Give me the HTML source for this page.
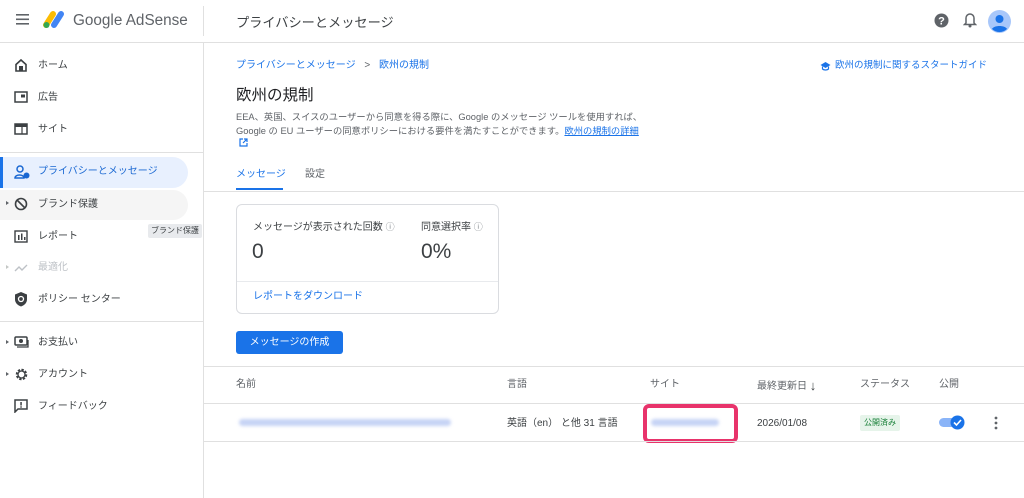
<!DOCTYPE html>
<html><head><meta charset="utf-8">
<style>
*{margin:0;padding:0;box-sizing:border-box}
body{width:1024px;height:498px;overflow:hidden;background:#fff;font-family:"Liberation Sans","Noto Sans CJK JP",sans-serif;color:#3c4043;position:relative}
.a{position:absolute;white-space:nowrap}
.hl{position:absolute;height:1px;background:#e0e0e0}
.nav{position:absolute;left:38px;font-size:10px;color:#3c4043;line-height:12px}
.ic{position:absolute;left:14px}
.s{font-size:10px;line-height:12px}
.blue{color:#1a73e8}
.blur{position:absolute;height:7px;background:#c6d3f5;border-radius:4px;filter:blur(1.5px)}
</style></head><body>
<!-- header -->
<div class="hl" style="left:0;top:42px;width:1024px"></div>
<div class="a" style="left:203px;top:6px;width:1px;height:30px;background:#e0e0e0"></div>
<svg class="a" style="left:16px;top:14px" width="13" height="11"><rect y="0" width="13" height="1.6" fill="#5f6368"/><rect y="4.5" width="13" height="1.6" fill="#5f6368"/><rect y="9" width="13" height="1.6" fill="#5f6368"/></svg>
<svg class="a" style="left:42px;top:10px" width="24" height="20"><line x1="4" y1="15" x2="11" y2="4" stroke="#fbbc04" stroke-width="6" stroke-linecap="round"/><line x1="12" y1="15" x2="19" y2="4" stroke="#4285f4" stroke-width="6" stroke-linecap="round"/><circle cx="4.5" cy="15" r="3" fill="#34a853"/></svg>
<div class="a" style="left:73px;top:12px;font-size:15.3px;color:#5f6368">Google AdSense</div>
<div class="a" style="left:236px;top:12px;font-size:13.2px;color:#3c4043">プライバシーとメッセージ</div>
<svg class="a" style="left:934px;top:13px" width="15" height="15"><circle cx="7.5" cy="7.5" r="7" fill="#5f6368"/><text x="7.5" y="11.5" font-size="11" font-weight="bold" fill="#fff" text-anchor="middle" font-family="Liberation Sans">?</text></svg>
<svg class="a" style="left:963px;top:12px" width="14" height="16"><path d="M7 2a4 4 0 0 0-4 4v5l-1.5 1.5h11L11 11V6a4 4 0 0 0-4-4z" fill="none" stroke="#5f6368" stroke-width="1.5"/><circle cx="7" cy="14" r="1.5" fill="#5f6368"/></svg>
<svg class="a" style="left:988px;top:10px" width="23" height="23"><circle cx="11.5" cy="11.5" r="11.5" fill="#a8c7fa"/><circle cx="11.5" cy="9" r="4" fill="#1a73e8"/><path d="M4 19c2-4 13-4 15 0a11 11 0 0 1-15 0z" fill="#1a73e8"/></svg>
<!-- sidebar -->
<div class="a" style="left:203px;top:42px;width:1px;height:456px;background:#e0e0e0"></div>
<div class="nav" style="top:60px">ホーム</div>
<svg class="ic" style="top:58px" width="14" height="14"><path d="M2 6.5L7 2l5 4.5V13H2z" fill="none" stroke="#3c4043" stroke-width="1.6"/><rect x="5" y="8" width="4" height="5" fill="#3c4043"/></svg>
<div class="nav" style="top:92px">広告</div>
<svg class="ic" style="top:91px" width="14" height="12"><rect x="1" y="1" width="12" height="10" fill="none" stroke="#3c4043" stroke-width="1.5"/><rect x="7" y="3.5" width="4" height="3" fill="#3c4043"/></svg>
<div class="nav" style="top:124px">サイト</div>
<svg class="ic" style="top:123px" width="14" height="12"><rect x="1" y="1" width="12" height="10" fill="none" stroke="#3c4043" stroke-width="1.5"/><rect x="1" y="1" width="12" height="3" fill="#3c4043"/><line x1="8" y1="4" x2="8" y2="11" stroke="#3c4043" stroke-width="1.2"/></svg>
<div class="hl" style="left:0;top:152px;width:203px"></div>
<div class="a" style="left:0;top:157px;width:188px;height:31px;background:#e8f0fe;border-radius:0 16px 16px 0"></div>
<div class="a" style="left:0;top:157px;width:3px;height:31px;background:#1a73e8"></div>
<div class="nav" style="top:166px;color:#1967d2">プライバシーとメッセージ</div>
<svg class="ic" style="top:165px" width="16" height="14"><circle cx="6" cy="4" r="3" fill="none" stroke="#1967d2" stroke-width="1.5"/><path d="M1 13c0-4 9-4 9 0z" fill="none" stroke="#1967d2" stroke-width="1.5"/><circle cx="12.5" cy="10.5" r="3" fill="#1967d2"/></svg>
<div class="a" style="left:0;top:190px;width:188px;height:30px;background:#f5f5f5;border-radius:0 16px 16px 0"></div>
<div class="a" style="left:6px;top:201px;width:0;height:0;border-left:3px solid #5f6368;border-top:2.5px solid transparent;border-bottom:2.5px solid transparent"></div>
<div class="nav" style="top:199px">ブランド保護</div>
<svg class="ic" style="top:197px" width="14" height="14"><circle cx="7" cy="7" r="5.5" fill="none" stroke="#3c4043" stroke-width="1.6"/><line x1="3" y1="3" x2="11" y2="11" stroke="#3c4043" stroke-width="1.6"/></svg>
<div class="a" style="left:148px;top:224px;width:54px;height:14px;background:#e8eaed;border-radius:2px;font-size:8px;line-height:14px;text-align:center;color:#3c4043">ブランド保護</div>
<div class="nav" style="top:231px">レポート</div>
<svg class="ic" style="top:230px" width="14" height="13"><rect x="1" y="1" width="12" height="11" fill="none" stroke="#3c4043" stroke-width="1.4"/><rect x="4" y="5" width="1.5" height="5" fill="#3c4043"/><rect x="7" y="3.5" width="1.5" height="6.5" fill="#3c4043"/><rect x="10" y="7" width="1.5" height="3" fill="#3c4043"/></svg>
<div class="a" style="left:6px;top:265px;width:0;height:0;border-left:3px solid #c4c7c5;border-top:2.5px solid transparent;border-bottom:2.5px solid transparent"></div>
<div class="nav" style="top:262px;color:#bdc1c6">最適化</div>
<svg class="ic" style="top:263px" width="14" height="10"><path d="M1 8l4-4 3 3 5-5" fill="none" stroke="#bdc1c6" stroke-width="1.4"/></svg>
<div class="nav" style="top:294px">ポリシー センター</div>
<svg class="ic" style="top:291px" width="14" height="16"><path d="M7 1l6 2.5v5c0 3.5-3 6-6 7-3-1-6-3.5-6-7v-5z" fill="#3c4043"/><circle cx="7" cy="8" r="2.5" fill="none" stroke="#fff" stroke-width="1.3"/></svg>
<div class="hl" style="left:0;top:321px;width:203px"></div>
<div class="a" style="left:6px;top:340px;width:0;height:0;border-left:3px solid #5f6368;border-top:2.5px solid transparent;border-bottom:2.5px solid transparent"></div>
<div class="nav" style="top:337px">お支払い</div>
<svg class="ic" style="top:336px" width="15" height="12"><rect x="1" y="1" width="12" height="8" rx="1" fill="none" stroke="#3c4043" stroke-width="1.5"/><circle cx="7" cy="5" r="2" fill="#3c4043"/><path d="M3 11h11V4" fill="none" stroke="#3c4043" stroke-width="1.3"/></svg>
<div class="a" style="left:6px;top:372px;width:0;height:0;border-left:3px solid #5f6368;border-top:2.5px solid transparent;border-bottom:2.5px solid transparent"></div>
<div class="nav" style="top:369px">アカウント</div>
<svg class="ic" style="top:367px" width="15" height="15"><circle cx="7.5" cy="7.5" r="4.5" fill="none" stroke="#3c4043" stroke-width="2.5" stroke-dasharray="2.2 1.3"/><circle cx="7.5" cy="7.5" r="3.5" fill="none" stroke="#3c4043" stroke-width="1.3"/></svg>
<div class="nav" style="top:401px">フィードバック</div>
<svg class="ic" style="top:399px" width="14" height="14"><path d="M1 1h12v9H4l-3 3z" fill="none" stroke="#3c4043" stroke-width="1.5"/><rect x="6.3" y="3" width="1.5" height="3.5" fill="#3c4043"/><rect x="6.3" y="7.3" width="1.5" height="1.4" fill="#3c4043"/></svg>
<!-- main -->
<div class="a s blue" style="left:236px;top:60px">プライバシーとメッセージ <span style="color:#5f6368;margin:0 6px">&gt;</span> 欧州の規制</div>
<svg class="a" style="left:820px;top:61px" width="11" height="10"><path d="M5.5 1L10.5 4 5.5 7 .5 4z" fill="#1a73e8"/><path d="M2.5 5.5v2.5c1.5 1.3 4.5 1.3 6 0V5.5" fill="none" stroke="#1a73e8" stroke-width="1.2"/></svg>
<div class="a s blue" style="left:835px;top:60px;font-size:9.5px">欧州の規制に関するスタートガイド</div>
<div class="a" style="left:236px;top:83px;font-size:15.5px;color:#202124">欧州の規制</div>
<div class="a" style="left:236px;top:110px;font-size:9.3px;line-height:14px;color:#5f6368">EEA、英国、スイスのユーザーから同意を得る際に、Google のメッセージ ツールを使用すれば、<br>Google の EU ユーザーの同意ポリシーにおける要件を満たすことができます。<span class="blue" style="text-decoration:underline">欧州の規制の詳細</span></div>
<svg class="a" style="left:239px;top:138px" width="9" height="9"><path d="M4 1H1v7h7V5M5 1h3v3M8 1L4 5" fill="none" stroke="#1a73e8" stroke-width="1.2"/></svg>
<div class="a s blue" style="left:236px;top:169px">メッセージ</div>
<div class="a s" style="left:305px;top:169px;color:#5f6368">設定</div>
<div class="a" style="left:236px;top:188px;width:47px;height:2px;background:#1a73e8"></div>
<div class="hl" style="left:204px;top:191px;width:820px"></div>
<div class="a" style="left:236px;top:204px;width:263px;height:110px;border:1px solid #dadce0;border-radius:6px"></div>
<div class="hl" style="left:237px;top:281px;width:261px;background:#e8eaed"></div>
<div class="a s" style="left:253px;top:221px;color:#3c4043">メッセージが表示された回数 <span style="font-size:9px;color:#80868b">ⓘ</span></div>
<div class="a s" style="left:421px;top:221px;color:#3c4043">同意選択率 <span style="font-size:9px;color:#80868b">ⓘ</span></div>
<div class="a" style="left:252px;top:240px;font-size:21px;color:#3c4043">0</div>
<div class="a" style="left:421px;top:240px;font-size:21px;color:#3c4043">0%</div>
<div class="a s blue" style="left:253px;top:291px">レポートをダウンロード</div>
<div class="a" style="left:236px;top:331px;width:107px;height:23px;background:#1a73e8;border-radius:3px;color:#fff;font-size:10px;line-height:23px;text-align:center">メッセージの作成</div>
<!-- table -->
<div class="hl" style="left:204px;top:366px;width:820px"></div>
<div class="a s" style="left:236px;top:379px;color:#5f6368">名前</div>
<div class="a s" style="left:507px;top:379px;color:#5f6368">言語</div>
<div class="a s" style="left:650px;top:379px;color:#5f6368">サイト</div>
<div class="a s" style="left:757px;top:379px;color:#5f6368">最終更新日 <span style="color:#3c4043;font-size:13px;position:relative;top:1px">↓</span></div>
<div class="a s" style="left:860px;top:379px;color:#5f6368">ステータス</div>
<div class="a s" style="left:939px;top:379px;color:#5f6368">公開</div>
<div class="hl" style="left:204px;top:403px;width:820px"></div>
<div class="blur" style="left:239px;top:419px;width:212px"></div>
<div class="a s" style="left:507px;top:418px;color:#3c4043">英語（en） と他 31 言語</div>
<div class="a" style="left:643px;top:404px;width:95px;height:39px;border:4px solid #e8336b;border-radius:6px"></div>
<div class="blur" style="left:651px;top:419px;width:68px"></div>
<div class="a s" style="left:757px;top:418px;color:#3c4043">2026/01/08</div>
<div class="a" style="left:860px;top:415px;width:40px;height:16px;background:#e6f4ea;color:#188038;font-size:8px;line-height:16px;text-align:center;border-radius:2px">公開済み</div>
<div class="a" style="left:939px;top:418px;width:22px;height:9px;background:#8ab4f8;border-radius:5px"></div>
<svg class="a" style="left:950px;top:415px" width="15" height="15"><circle cx="7.5" cy="7.5" r="7" fill="#1a73e8"/><path d="M4 7.5l2.5 2.5 4.5-5" fill="none" stroke="#fff" stroke-width="1.6"/></svg>
<svg class="a" style="left:994px;top:416px" width="4" height="14"><circle cx="2" cy="2" r="1.4" fill="#5f6368"/><circle cx="2" cy="7" r="1.4" fill="#5f6368"/><circle cx="2" cy="12" r="1.4" fill="#5f6368"/></svg>
<div class="hl" style="left:204px;top:441px;width:820px"></div>
</body></html>
